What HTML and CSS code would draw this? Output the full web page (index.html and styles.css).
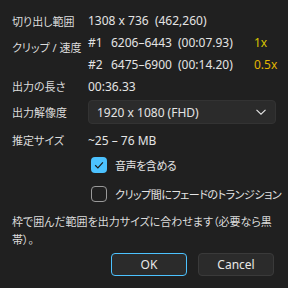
FILE: index.html
```html
<!DOCTYPE html>
<html lang="ja">
<head>
<meta charset="utf-8">
<link rel="stylesheet" href="styles.css">
</head>
<body>
<div class="dialog">
  <div class="row r1">
    <div class="label">切り出し範囲</div>
    <div class="value">1308 x 736&nbsp; (462,260)</div>
  </div>
  <div class="row r2">
    <div class="label">クリップ / 速度</div>
    <div class="clips">
      <div class="clip"><span class="num">#1</span><span class="range">6206–6443</span><span class="dur">(00:07.93)</span><span class="speed">1x</span></div>
      <div class="clip"><span class="num">#2</span><span class="range">6475–6900</span><span class="dur">(00:14.20)</span><span class="speed half">0.5x</span></div>
    </div>
  </div>
  <div class="row r3">
    <div class="label">出力の長さ</div>
    <div class="value">00:36.33</div>
  </div>
  <div class="row r4">
    <div class="label">出力解像度</div>
    <div class="select">
      <span>1920 x 1080 (FHD)</span>
      <svg class="chev" width="12" height="8" viewBox="0 0 12 8"><path d="M1.5 1.8 L6 6.2 L10.5 1.8" fill="none" stroke="#e6e6e6" stroke-width="1.1"/></svg>
    </div>
  </div>
  <div class="row r5">
    <div class="label">推定サイズ</div>
    <div class="value">~25 – 76 MB</div>
  </div>
  <div class="check on">
    <span class="box"><svg width="16" height="16" viewBox="0 0 16 16"><path d="M4.2 8.3 L6.9 10.9 L11.9 5.4" fill="none" stroke="#1a1a1a" stroke-width="1.2"/></svg></span>
    <span class="ctext">音声を含める</span>
  </div>
  <div class="check off">
    <span class="box"></span>
    <span class="ctext">クリップ間にフェードのトランジション</span>
  </div>
  <p class="note">枠で囲んだ範囲を出力サイズに合わせます（必要なら黒帯）。</p>
  <div class="buttons">
    <button class="btn ok">OK</button>
    <button class="btn">Cancel</button>
  </div>
</div>
</body>
</html>
```
FILE: styles.css
```css
html, body {
  margin: 0;
  padding: 0;
  background: #202020;
}
body {
  width: 288px;
  height: 288px;
  overflow: hidden;
  font-family: "Noto Sans", "Noto Sans CJK JP", sans-serif;
  font-size: 12px;
  font-feature-settings: "palt";
  color: #e4e4e4;
}
.dialog {
  padding: 10px 12px 0 12px;
  display: flex;
  flex-direction: column;
}
.row {
  display: flex;
  align-items: center;
}
.label {
  width: 76px;
  flex: none;
  white-space: nowrap;
  font-size: 11px;
  color: #dcdcdc;
}
.r1 { height: 21px; }
.r2 { height: 44px; align-items: flex-start; }
.r2 .label { margin-top: 8px; line-height: 18px; }
.clips { display: flex; flex-direction: column; }
.clip { height: 22px; display: flex; align-items: center; white-space: nowrap; }
.num { width: 23px; }
.range { width: 67px; }
.dur { width: 76px; }
.speed { color: #d8c400; }
.speed.half { color: #e2b600; }
.r3 { height: 22px; }
.r4 { height: 24px; margin-top: 3px; }
.select {
  flex: 1;
  height: 24px;
  box-sizing: border-box;
  background: #2b2b2b;
  border: 1px solid #333;
  border-radius: 4px;
  display: flex;
  align-items: center;
  justify-content: space-between;
  padding: 0 8px 0 8px;
}
.r5 { height: 22px; margin-top: 5px; }
.check {
  display: flex;
  align-items: center;
  margin-left: 79px;
  height: 18px;
  white-space: nowrap;
  font-size: 11px;
}
.ctext { letter-spacing: -0.45px; }
.check.on { margin-top: 5px; }
.check.off { margin-top: 11px; }
.box {
  width: 16px;
  height: 16px;
  box-sizing: border-box;
  border-radius: 4px;
  margin-right: 8px;
  flex: none;
}
.on .box { background: #4cc2ff; }
.off .box { border: 1px solid #9a9a9a; }
.box svg { display: block; }
.note {
  margin: 10px 0 0 0;
  line-height: 18px;
  font-size: 11px;
  color: #dcdcdc;
}
.buttons {
  display: flex;
  justify-content: flex-end;
  gap: 11px;
  margin-top: 4px;
  padding-right: 2px;
}
.btn {
  width: 76px;
  height: 23px;
  box-sizing: border-box;
  background: #2b2b2b;
  border: 1px solid #3a3a3a;
  border-radius: 4px;
  color: #e8e8e8;
  font-family: inherit;
  font-size: 12px;
  padding: 0;
}
.btn.ok { border-color: #4cc2ff; }
```
